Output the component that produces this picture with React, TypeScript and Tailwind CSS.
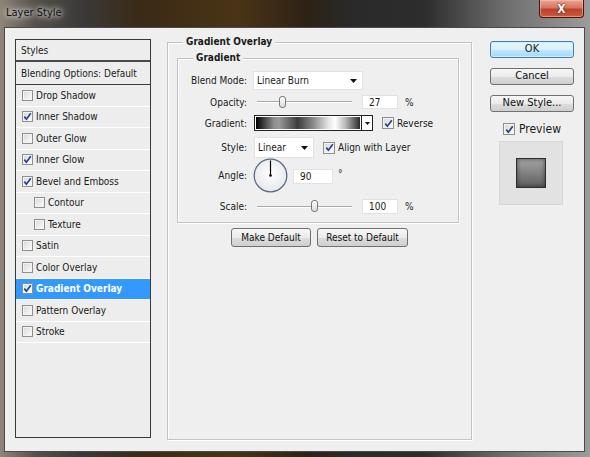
import React from "react";

function Check({ checked, className }: { checked?: boolean; className: string }) {
  return (
    <span
      className={
        "inline-flex shrink-0 items-center justify-center border border-[#8e8f8f] bg-[linear-gradient(135deg,#d6d6d6,#ffffff)] shadow-[inset_0_0_0_1px_#f4f4f4] " +
        className
      }
    >
      {checked && (
        <svg width="9" height="9" viewBox="0 0 9 9">
          <path d="M1.3 4.6 L3.4 7.2 L7.8 1.2" stroke="#2b3f8f" strokeWidth="1.7" fill="none" />
        </svg>
      )}
    </span>
  );
}

const items = [
  { label: "Drop Shadow", checked: false },
  { label: "Inner Shadow", checked: true },
  { label: "Outer Glow", checked: false },
  { label: "Inner Glow", checked: true },
  { label: "Bevel and Emboss", checked: true },
  { label: "Contour", checked: false, indent: true },
  { label: "Texture", checked: false, indent: true },
  { label: "Satin", checked: false },
  { label: "Color Overlay", checked: false },
  { label: "Gradient Overlay", checked: true, active: true },
  { label: "Pattern Overlay", checked: false },
  { label: "Stroke", checked: false },
];

function Slider({ thumbLeft }: { thumbLeft: string }) {
  return (
    <div className="relative w-[95px] h-full flex items-center">
      <div className="w-full h-[2px] border-t border-[#a9a9a9] border-b border-b-white" />
      <div
        className={
          "absolute top-[1px] w-[7px] h-[12px] rounded-[3px] border border-[#7a7a7a] bg-[linear-gradient(180deg,#ffffff,#dadada)] " +
          thumbLeft
        }
      />
    </div>
  );
}

function Btn({ children, className }: { children: React.ReactNode; className: string }) {
  return (
    <div
      className={
        "flex items-center justify-center rounded-[3px] border border-[#707070] bg-[linear-gradient(180deg,#f6f6f6_0%,#ebebeb_50%,#dddddd_51%,#cfcfcf_100%)] text-[#111] " +
        className
      }
    >
      {children}
    </div>
  );
}

export default function App() {
  return (
    <div className="w-[590px] h-[457px] overflow-hidden flex flex-col bg-[linear-gradient(90deg,#8f8679_0%,#55504a_6%,#3a3938_14%,#3b2a15_24%,#4a3416_40%,#2e2215_52%,#2a2a2a_60%,#2d2d2d_72%,#6f6f6f_86%,#9c9c9c_100%)] font-['DejaVu_Sans_Condensed','DejaVu_Sans',sans-serif] text-[#1a1a1a]">
      {/* title bar */}
      <div className="h-[27px] shrink-0 flex items-start justify-between">
        <span className="pl-[6px] pt-[5px] text-[11px] text-[#111] [text-shadow:0_0_5px_#fff,0_0_8px_#fff]">
          Layer Style
        </span>
        <div className="mr-[6px] w-[45px] h-[18px] rounded-b-[4px] border border-t-0 border-[#4a150c] bg-[linear-gradient(180deg,#e9a595_0%,#d47663_45%,#c0412a_55%,#c95b40_100%)] shadow-[inset_0_0_0_1px_rgba(255,200,190,0.5)] flex items-center justify-center">
          <span className="text-white font-bold text-[12px] leading-none [text-shadow:0_0_2px_#5a1a10,0_0_1px_#5a1a10]">X</span>
        </div>
      </div>

      {/* client area */}
      <div className="ml-[4px] w-[581px] h-[425px] border border-[#4a4a4a] bg-[#efefef] flex items-start">
        {/* left list */}
        <div className="ml-[10px] mt-[11px] w-[136px] h-[399px] border border-[#3a3a3a] bg-[#ededed] flex flex-col text-[10px]">
          <div className="h-[22px] shrink-0 flex items-center pl-[5px] border-b-2 border-[#4a4a4a]">Styles</div>
          <div className="h-[23px] shrink-0 flex items-center pl-[5px] border-b border-[#3a3a3a]">
            Blending Options: Default
          </div>
          {items.map((it) => (
            <div
              key={it.label}
              className={
                "h-[21.5px] shrink-0 flex items-center gap-[3px] border-b border-white " +
                (it.indent ? "pl-[18px] " : "pl-[6px] ") +
                (it.active ? "bg-[#3399ff] text-white font-bold" : "")
              }
            >
              <Check checked={it.checked} className="w-[11px] h-[11px]" />
              <span>{it.label}</span>
            </div>
          ))}
        </div>

        {/* middle group */}
        <div className="relative ml-[16px] mt-[14px] w-[305px] h-[398px] border border-[#c3c3c3] shadow-[inset_1px_1px_0_#fff,1px_1px_0_#fff] flex flex-col items-start">
          <span className="absolute -top-[7px] left-[15px] px-[3px] bg-[#efefef] text-[10px] font-bold leading-[12px]">
            Gradient Overlay
          </span>
          {/* inner group */}
          <div className="relative ml-[9px] mt-[15px] w-[282px] border border-[#c3c3c3] shadow-[inset_1px_1px_0_#fff,1px_1px_0_#fff] pt-[12px] pb-[8px] flex flex-col text-[10px]">
            <span className="absolute -top-[7px] left-[15px] px-[3px] bg-[#efefef] font-bold leading-[12px]">
              Gradient
            </span>
            {/* blend mode */}
            <div className="h-[19px] flex items-center">
              <span className="w-[69px] text-right">Blend Mode:</span>
              <div className="ml-[6px] w-[110px] h-[19px] bg-white border border-[#e2e2e2] flex items-center justify-between pl-[3px] pr-[5px]">
                <span>Linear Burn</span>
                <svg width="7" height="4" viewBox="0 0 7 4">
                  <path d="M0 0 H7 L3.5 4 Z" fill="#111" />
                </svg>
              </div>
            </div>
            {/* opacity */}
            <div className="mt-[5px] h-[14px] flex items-center">
              <span className="w-[69px] text-right">Opacity:</span>
              <div className="ml-[10px] h-full">
                <Slider thumbLeft="left-[22px]" />
              </div>
              <div className="ml-[10px] w-[36px] h-[14px] bg-white border border-[#e2e2e2] flex items-center pl-[6px]">27</div>
              <span className="ml-[7px]">%</span>
            </div>
            {/* gradient */}
            <div className="mt-[6px] h-[16px] flex items-center">
              <span className="w-[69px] text-right">Gradient:</span>
              <div className="ml-[7px] w-[108px] h-[16px] border border-[#222] p-[1px] bg-white">
                <div className="w-full h-full bg-[linear-gradient(90deg,#000_0%,#8c8c8c_17%,#9a9a9a_22%,#3c3c3c_40%,#8a8a8a_55%,#e6e6e6_70%,#ffffff_76%,#b8b8b8_86%,#2a2a2a_100%)]" />
              </div>
              <div className="w-[11px] h-[16px] border border-l-0 border-[#222] bg-white flex items-center justify-center">
                <svg width="5" height="3" viewBox="0 0 5 3">
                  <path d="M0 0 H5 L2.5 3 Z" fill="#111" />
                </svg>
              </div>
              <Check checked className="ml-[9px] w-[12px] h-[12px]" />
              <span className="ml-[3px]">Reverse</span>
            </div>
            {/* style */}
            <div className="mt-[6px] h-[21px] flex items-center">
              <span className="w-[69px] text-right">Style:</span>
              <div className="ml-[7px] w-[60px] h-[21px] bg-white border border-[#e2e2e2] flex items-center justify-between pl-[3px] pr-[5px]">
                <span>Linear</span>
                <svg width="7" height="4" viewBox="0 0 7 4">
                  <path d="M0 0 H7 L3.5 4 Z" fill="#111" />
                </svg>
              </div>
              <Check checked className="ml-[9px] w-[12px] h-[12px]" />
              <span className="ml-[3px]">Align with Layer</span>
            </div>
            {/* angle */}
            <div className="h-[35px] flex items-center">
              <span className="w-[69px] text-right">Angle:</span>
              <svg className="ml-[6px]" width="35" height="35" viewBox="0 0 35 35">
                <defs>
                  <radialGradient id="dial" cx="50%" cy="45%" r="60%">
                    <stop offset="0%" stopColor="#ffffff" />
                    <stop offset="100%" stopColor="#e4e6ea" />
                  </radialGradient>
                </defs>
                <circle cx="17.5" cy="17.5" r="16.3" fill="url(#dial)" stroke="#5b6a84" strokeWidth="1.3" />
                <line x1="17.5" y1="17.5" x2="17.5" y2="2.5" stroke="#000" strokeWidth="1.2" />
                <circle cx="17.5" cy="17.5" r="1.3" fill="#000" />
              </svg>
              <div className="ml-[5px] mt-[2px] w-[40px] h-[15px] bg-white border border-[#e2e2e2] flex items-center pl-[6px]">90</div>
              <span className="ml-[5px] -mt-[4px]">°</span>
            </div>
            {/* scale */}
            <div className="mt-[6px] h-[15px] flex items-center">
              <span className="w-[69px] text-right">Scale:</span>
              <div className="ml-[10px] h-full">
                <Slider thumbLeft="left-[54px]" />
              </div>
              <div className="ml-[10px] w-[36px] h-[15px] bg-white border border-[#e2e2e2] flex items-center pl-[6px]">100</div>
              <span className="ml-[7px]">%</span>
            </div>
          </div>
          {/* buttons */}
          <div className="mt-[5px] w-full flex justify-center gap-[6px] text-[10px]">
            <Btn className="w-[80px] h-[19px]">Make Default</Btn>
            <Btn className="w-[91px] h-[19px]">Reset to Default</Btn>
          </div>
        </div>

        {/* right column */}
        <div className="ml-[18px] mt-[13px] w-[84px] flex flex-col text-[11px]">
          <div className="h-[17px] rounded-[3px] border border-[#3c7fb1] bg-[linear-gradient(180deg,#eaf6fd_0%,#d9f0fc_50%,#bee6fd_51%,#a7d9f5_100%)] shadow-[inset_0_0_0_1px_#c8f0ff] flex items-center justify-center">
            OK
          </div>
          <Btn className="mt-[10px] h-[17px]">Cancel</Btn>
          <Btn className="mt-[10px] h-[17px]">New Style...</Btn>
          <div className="mt-[10px] h-[14px] flex items-center pl-[13px] gap-[4px] text-[12px]">
            <Check checked className="w-[12px] h-[12px]" />
            <span>Preview</span>
          </div>
          <div className="mt-[5px] ml-[9px] w-[64px] h-[64px] bg-[#e2e2e2] border border-[#d6d6d6] flex items-center justify-center">
            <div className="w-[30px] h-[30px] border border-[#2e2e2e] bg-[linear-gradient(180deg,#a4a4a4,#5e5e5e)] shadow-[inset_0_0_4px_rgba(0,0,0,0.55)]" />
          </div>
        </div>
      </div>
    </div>
  );
}
